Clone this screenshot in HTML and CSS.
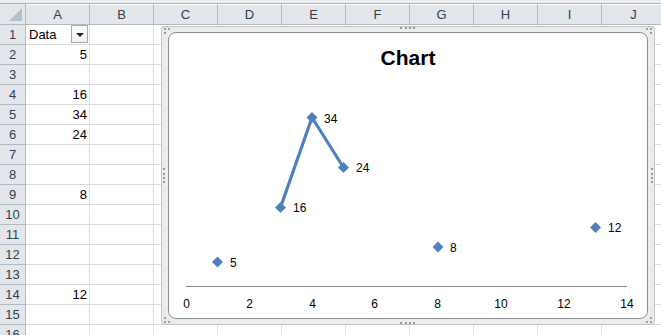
FILE: index.html
```html
<!DOCTYPE html>
<html lang="en">
<head>
    <meta charset="UTF-8">
    <meta name="viewport" content="width=device-width, initial-scale=1.0">
    <title>Sheet1 - Chart</title>
    <link rel="stylesheet" href="styles.css">
</head>
<body>
    <div class="top-strip"></div>
    <div class="sheet">
        <div class="grid">
            <!-- column headers -->
            <div class="hdr corner"><span class="corner-tri"></span></div>
            <div class="hdr col">A</div>
            <div class="hdr col">B</div>
            <div class="hdr col">C</div>
            <div class="hdr col">D</div>
            <div class="hdr col">E</div>
            <div class="hdr col">F</div>
            <div class="hdr col">G</div>
            <div class="hdr col">H</div>
            <div class="hdr col">I</div>
            <div class="hdr col">J</div>

            <div class="hdr row">1</div>
            <div class="cell text">Data<span class="filter-btn"><span class="filter-arrow"></span></span></div>
            <div class="cell"></div><div class="cell"></div><div class="cell"></div><div class="cell"></div><div class="cell"></div><div class="cell"></div><div class="cell"></div><div class="cell"></div><div class="cell"></div>

            <div class="hdr row">2</div>
            <div class="cell num">5</div>
            <div class="cell"></div><div class="cell"></div><div class="cell"></div><div class="cell"></div><div class="cell"></div><div class="cell"></div><div class="cell"></div><div class="cell"></div><div class="cell"></div>

            <div class="hdr row">3</div>
            <div class="cell"></div>
            <div class="cell"></div><div class="cell"></div><div class="cell"></div><div class="cell"></div><div class="cell"></div><div class="cell"></div><div class="cell"></div><div class="cell"></div><div class="cell"></div>

            <div class="hdr row">4</div>
            <div class="cell num">16</div>
            <div class="cell"></div><div class="cell"></div><div class="cell"></div><div class="cell"></div><div class="cell"></div><div class="cell"></div><div class="cell"></div><div class="cell"></div><div class="cell"></div>

            <div class="hdr row">5</div>
            <div class="cell num">34</div>
            <div class="cell"></div><div class="cell"></div><div class="cell"></div><div class="cell"></div><div class="cell"></div><div class="cell"></div><div class="cell"></div><div class="cell"></div><div class="cell"></div>

            <div class="hdr row">6</div>
            <div class="cell num">24</div>
            <div class="cell"></div><div class="cell"></div><div class="cell"></div><div class="cell"></div><div class="cell"></div><div class="cell"></div><div class="cell"></div><div class="cell"></div><div class="cell"></div>

            <div class="hdr row">7</div>
            <div class="cell"></div>
            <div class="cell"></div><div class="cell"></div><div class="cell"></div><div class="cell"></div><div class="cell"></div><div class="cell"></div><div class="cell"></div><div class="cell"></div><div class="cell"></div>

            <div class="hdr row">8</div>
            <div class="cell"></div>
            <div class="cell"></div><div class="cell"></div><div class="cell"></div><div class="cell"></div><div class="cell"></div><div class="cell"></div><div class="cell"></div><div class="cell"></div><div class="cell"></div>

            <div class="hdr row">9</div>
            <div class="cell num">8</div>
            <div class="cell"></div><div class="cell"></div><div class="cell"></div><div class="cell"></div><div class="cell"></div><div class="cell"></div><div class="cell"></div><div class="cell"></div><div class="cell"></div>

            <div class="hdr row">10</div>
            <div class="cell"></div>
            <div class="cell"></div><div class="cell"></div><div class="cell"></div><div class="cell"></div><div class="cell"></div><div class="cell"></div><div class="cell"></div><div class="cell"></div><div class="cell"></div>

            <div class="hdr row">11</div>
            <div class="cell"></div>
            <div class="cell"></div><div class="cell"></div><div class="cell"></div><div class="cell"></div><div class="cell"></div><div class="cell"></div><div class="cell"></div><div class="cell"></div><div class="cell"></div>

            <div class="hdr row">12</div>
            <div class="cell"></div>
            <div class="cell"></div><div class="cell"></div><div class="cell"></div><div class="cell"></div><div class="cell"></div><div class="cell"></div><div class="cell"></div><div class="cell"></div><div class="cell"></div>

            <div class="hdr row">13</div>
            <div class="cell"></div>
            <div class="cell"></div><div class="cell"></div><div class="cell"></div><div class="cell"></div><div class="cell"></div><div class="cell"></div><div class="cell"></div><div class="cell"></div><div class="cell"></div>

            <div class="hdr row">14</div>
            <div class="cell num">12</div>
            <div class="cell"></div><div class="cell"></div><div class="cell"></div><div class="cell"></div><div class="cell"></div><div class="cell"></div><div class="cell"></div><div class="cell"></div><div class="cell"></div>

            <div class="hdr row">15</div>
            <div class="cell"></div>
            <div class="cell"></div><div class="cell"></div><div class="cell"></div><div class="cell"></div><div class="cell"></div><div class="cell"></div><div class="cell"></div><div class="cell"></div><div class="cell"></div>

            <div class="hdr row">16</div>
            <div class="cell"></div>
            <div class="cell"></div><div class="cell"></div><div class="cell"></div><div class="cell"></div><div class="cell"></div><div class="cell"></div><div class="cell"></div><div class="cell"></div><div class="cell"></div>
        </div>

        <!-- embedded chart, floats over the cells -->
        <div class="chart-frame">
            <span class="grip grip-tl"></span>
            <span class="grip grip-tr"></span>
            <span class="grip grip-bl"></span>
            <span class="grip grip-br"></span>
            <span class="grip grip-top"></span>
            <span class="grip grip-bottom"></span>
            <span class="grip grip-left"></span>
            <span class="grip grip-right"></span>
            <div class="chart-area">
                <svg class="plot" width="478" height="285" viewBox="169 33 478 285">
                    <text class="chart-title" x="408" y="65" text-anchor="middle">Chart</text>

                    <line x1="186" y1="286.5" x2="627" y2="286.5" stroke="#868686" stroke-width="1"/>
                    <g class="tick-labels" text-anchor="middle">
                        <text x="186.5" y="308">0</text>
                        <text x="249.5" y="308">2</text>
                        <text x="312.5" y="308">4</text>
                        <text x="374.5" y="308">6</text>
                        <text x="437.5" y="308">8</text>
                        <text x="501" y="308">10</text>
                        <text x="564" y="308">12</text>
                        <text x="627" y="308">14</text>
                    </g>

                    <polyline points="280.5,207.5 312,117.5 343.5,167.5" fill="none" stroke="#4f81bd" stroke-width="3.2" stroke-linejoin="round"/>

                    <g class="markers" fill="#4f81bd">
                        <path d="M217.5 256.5 L223 262 L217.5 267.5 L212 262 Z"/>
                        <path d="M280.5 202 L286 207.5 L280.5 213 L275 207.5 Z"/>
                        <path d="M312 112 L317.5 117.5 L312 123 L306.5 117.5 Z"/>
                        <path d="M343.5 162 L349 167.5 L343.5 173 L338 167.5 Z"/>
                        <path d="M438 241.5 L443.5 247 L438 252.5 L432.5 247 Z"/>
                        <path d="M595.5 222 L601 227.5 L595.5 233 L590 227.5 Z"/>
                    </g>

                    <g class="data-labels">
                        <text x="230" y="267">5</text>
                        <text x="293" y="212">16</text>
                        <text x="324" y="123">34</text>
                        <text x="356" y="172">24</text>
                        <text x="450" y="252">8</text>
                        <text x="608" y="232">12</text>
                    </g>
                </svg>
            </div>
        </div>
    </div>
</body>
</html>
```

FILE: styles.css
```css
body {
    margin: 0;
    padding: 0;
    background-color: #ffffff;
    font-family: "Liberation Sans", Arial, sans-serif;
    overflow: hidden;
}
.top-strip {
    height: 3px;
    background-color: #eceef1;
    border-bottom: 1px solid #a9b1bb;
}
.sheet {
    position: relative;
}
.grid {
    display: grid;
    grid-template-columns: 26px repeat(10, 64px);
    grid-template-rows: 21px;
    grid-auto-rows: 20px;
}
.hdr {
    box-sizing: border-box;
    background-color: #e3e6ea;
    border-right: 1px solid #b4bac2;
    border-bottom: 1px solid #b4bac2;
    color: #34404e;
    font-size: 13px;
    display: flex;
    align-items: center;
    justify-content: center;
}
.col {
    border-top: 1px solid #ffffff;
}
.corner {
    justify-content: flex-end;
    align-items: flex-end;
    padding: 0 3px 3px 0;
}
.corner-tri {
    width: 0;
    height: 0;
    border-left: 13px solid transparent;
    border-bottom: 13px solid #b9bfc7;
}
.cell {
    box-sizing: border-box;
    border-right: 1px solid #dadcdd;
    border-bottom: 1px solid #dadcdd;
    font-size: 13px;
    color: #000000;
    line-height: 19px;
    padding: 0 2px;
    white-space: nowrap;
}
.text {
    position: relative;
    padding-left: 3px;
}
.num {
    text-align: right;
}
.filter-btn {
    position: absolute;
    right: 1px;
    top: 0;
    width: 17px;
    height: 18px;
    box-sizing: border-box;
    border: 1px solid #a3aab3;
    background: linear-gradient(#ffffff, #eef0f3);
    display: flex;
    align-items: center;
    justify-content: center;
}
.filter-arrow {
    width: 0;
    height: 0;
    border-left: 4px solid transparent;
    border-right: 4px solid transparent;
    border-top: 4px solid #222222;
    margin-top: 1px;
}
.chart-frame {
    position: absolute;
    left: 161px;
    top: 22px;
    width: 494px;
    height: 299px;
    box-sizing: border-box;
    border: 1px solid #c3c3c3;
    border-radius: 3px;
    background-color: #ececec;
    padding: 5px 6px;
}
.chart-area {
    height: 100%;
    box-sizing: border-box;
    background-color: #ffffff;
    border: 1px solid #8f8f8f;
    border-radius: 8px;
    overflow: hidden;
}
.plot {
    display: block;
    font-family: "Liberation Sans", Arial, sans-serif;
}
.chart-title {
    font-size: 21px;
    font-weight: bold;
    fill: #000000;
}
.tick-labels text,
.data-labels text {
    font-size: 12px;
    fill: #000000;
}
.grip {
    position: absolute;
}
.grip-top,
.grip-bottom {
    left: 238px;
    width: 15px;
    border-top: 2px dotted #9a9a9a;
}
.grip-top {
    top: 0;
}
.grip-bottom {
    bottom: 0;
}
.grip-left,
.grip-right {
    top: 141px;
    height: 15px;
    border-left: 2px dotted #9a9a9a;
}
.grip-left {
    left: 1px;
}
.grip-right {
    right: 1px;
}
.grip-tl,
.grip-tr,
.grip-bl,
.grip-br {
    width: 6px;
    height: 6px;
    box-sizing: border-box;
    border-color: #9a9a9a;
    border-style: dotted;
    border-width: 0;
}
.grip-tl {
    left: 2px;
    top: 1px;
    border-top-width: 2px;
    border-left-width: 2px;
}
.grip-tr {
    right: 2px;
    top: 1px;
    border-top-width: 2px;
    border-right-width: 2px;
}
.grip-bl {
    left: 2px;
    bottom: 1px;
    border-bottom-width: 2px;
    border-left-width: 2px;
}
.grip-br {
    right: 2px;
    bottom: 1px;
    border-bottom-width: 2px;
    border-right-width: 2px;
}
```
